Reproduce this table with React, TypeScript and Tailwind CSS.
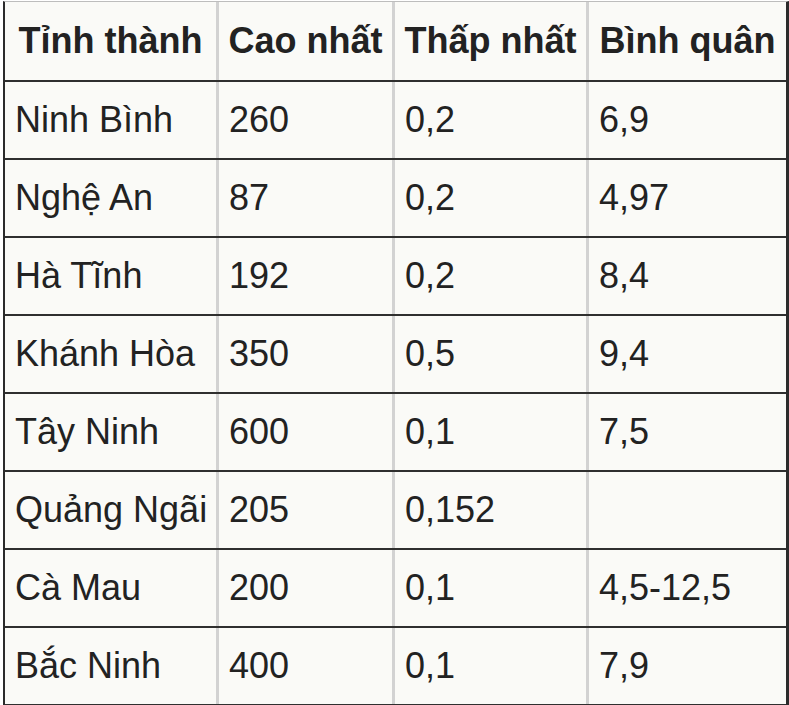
import React from "react";

const rows: [string, string, string, string][] = [
  ["Ninh Bình", "260", "0,2", "6,9"],
  ["Nghệ An", "87", "0,2", "4,97"],
  ["Hà Tĩnh", "192", "0,2", "8,4"],
  ["Khánh Hòa", "350", "0,5", "9,4"],
  ["Tây Ninh", "600", "0,1", "7,5"],
  ["Quảng Ngãi", "205", "0,152", ""],
  ["Cà Mau", "200", "0,1", "4,5-12,5"],
  ["Bắc Ninh", "400", "0,1", "7,9"],
];

const widths = ["w-[214px]", "w-[176px]", "w-[194px]", "w-[197px]"];

export default function App() {
  return (
    <div
      className="w-[789px] h-[705px] overflow-hidden bg-white pt-[1px] pl-[3px]"
      style={{ fontFamily: '"Liberation Sans", Arial, sans-serif' }}
    >
      <div className="w-[786px] border-t border-t-[#bdbdbd] border-l-2 border-r-[3px] border-l-[#2b2b2b] border-r-[#2b2b2b] bg-[#fafaf7] text-[#222]">
        <div className="flex h-[80px] border-b-2 border-[#2f2f2f]">
          {["Tỉnh thành", "Cao nhất", "Thấp nhất", "Bình quân"].map((h, i) => (
            <div
              key={h}
              className={`${widths[i]} shrink-0 flex items-center justify-center font-bold text-[36px] whitespace-nowrap ${
                i < 3 ? "border-r-[3px] border-[#d2d2d2]" : ""
              }`}
            >
              {h}
            </div>
          ))}
        </div>
        {rows.map((r, ri) => (
          <div key={ri} className="flex h-[78px] border-b-2 border-[#2f2f2f]">
            {r.map((c, i) => (
              <div
                key={i}
                className={`${widths[i]} shrink-0 flex items-center pl-[10px] text-[36px] whitespace-nowrap ${
                  i < 3 ? "border-r-[3px] border-[#d2d2d2]" : ""
                }`}
              >
                {c}
              </div>
            ))}
          </div>
        ))}
      </div>
    </div>
  );
}
